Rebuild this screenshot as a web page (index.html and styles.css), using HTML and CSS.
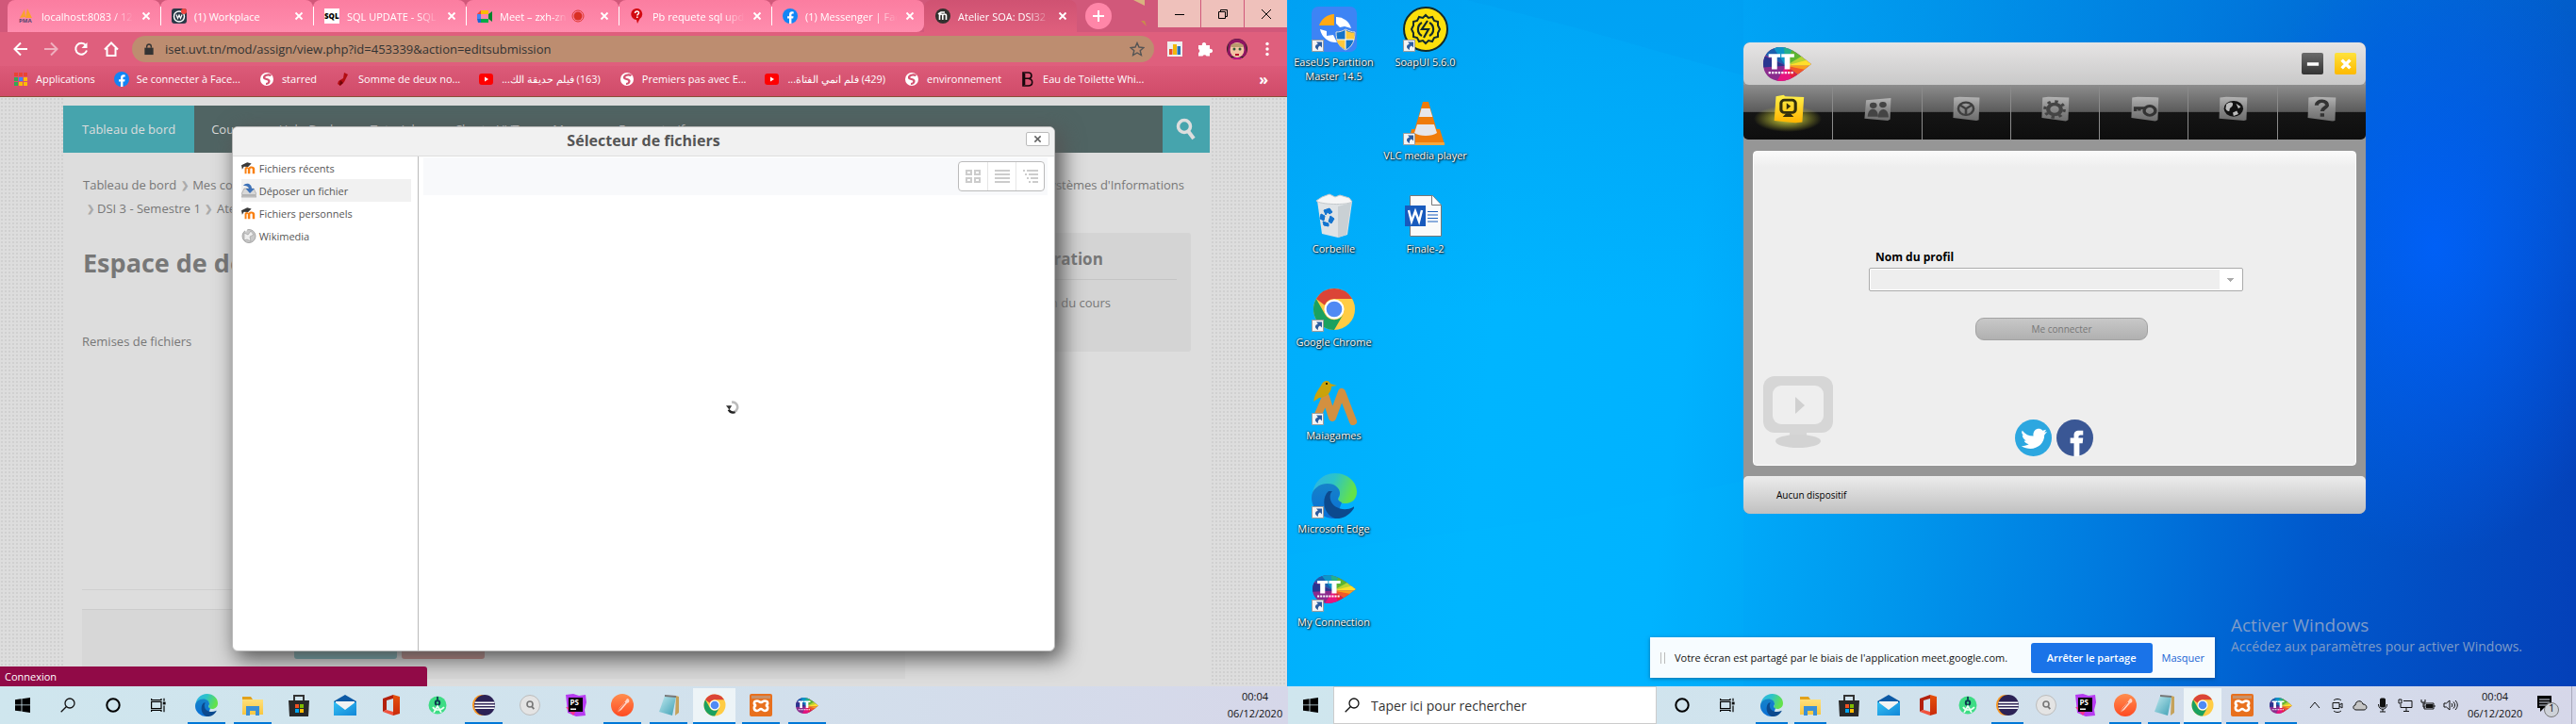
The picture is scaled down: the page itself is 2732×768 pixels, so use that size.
FILE: index.html
```html
<!DOCTYPE html>
<html lang="fr">
<head>
<meta charset="utf-8">
<title>Atelier SOA: DSI32</title>
<link rel="stylesheet" href="styles.css">
</head>
<body>
<svg class="sprite" aria-hidden="true">
  <defs>
    <linearGradient id="g-edge" x1="0" y1="0" x2="1" y2="0.3"><stop offset="0" stop-color="#2fb3e8"/><stop offset=".5" stop-color="#2cc3c9"/><stop offset="1" stop-color="#63e24b"/></linearGradient>
    <linearGradient id="g-edge2" x1="0" y1="0" x2="0" y2="1"><stop offset="0" stop-color="#1683c9"/><stop offset="1" stop-color="#0a6fd6"/></linearGradient>
    <linearGradient id="g-mail" x1="0" y1="0" x2="1" y2="1"><stop offset="0" stop-color="#35c0f3"/><stop offset="1" stop-color="#1187d8"/></linearGradient>
    <linearGradient id="g-post" x1="0" y1="0" x2="0" y2="1"><stop offset="0" stop-color="#ff8e4f"/><stop offset="1" stop-color="#ff4a22"/></linearGradient>
    <linearGradient id="g-office" x1="0" y1="0" x2="0" y2="1"><stop offset="0" stop-color="#e6520c"/><stop offset="1" stop-color="#c92a0b"/></linearGradient>
    <linearGradient id="g-folder" x1="0" y1="0" x2="0" y2="1"><stop offset="0" stop-color="#ffe07a"/><stop offset="1" stop-color="#f8c63f"/></linearGradient>
    <linearGradient id="g-note" x1="0" y1="0" x2="1" y2="1"><stop offset="0" stop-color="#bfe9ef"/><stop offset="1" stop-color="#3e9fb4"/></linearGradient>
    <linearGradient id="g-tile" x1="0" y1="0" x2="0" y2="1"><stop offset="0" stop-color="#b4b4b4"/><stop offset=".45" stop-color="#8c8c8c"/><stop offset="1" stop-color="#6c6c6c"/></linearGradient>
    <linearGradient id="g-gold" x1="0" y1="0" x2="0" y2="1"><stop offset="0" stop-color="#fff04a"/><stop offset="1" stop-color="#ffb400"/></linearGradient>
    <clipPath id="c-tt"><path d="M20 4C9 4 3 13 3 24s6 20 17 20c9 0 20-12 28-20C40 16 29 4 20 4z"/></clipPath>
    <clipPath id="c-face"><circle cx="12" cy="12" r="11"/></clipPath>
  </defs>
  <symbol id="i-win" viewBox="0 0 16 16"><path d="M0 2.200 6.600 1.300v6.200H0zM7.400 1.200 16 0v7.500H7.400zM0 8.300h6.600v6.300L0 13.700zM7.400 8.300H16V16l-8.600-1.200z"/></symbol>
  <symbol id="i-search" viewBox="0 0 16 16"><g fill="none" stroke="#111" stroke-width="1.300"><circle cx="10" cy="6" r="5"/><path d="M6.500 9.500.7 15.300"/></g></symbol>
  <symbol id="i-cortana" viewBox="0 0 16 16"><circle cx="8" cy="8" r="6.700" fill="none" stroke="#000" stroke-width="2"/></symbol>
  <symbol id="i-task" viewBox="0 0 16 16"><g fill="none" stroke="#000" stroke-width="1.200"><path d="M.6 4.500h10.400v7H.6zM.6 1v1.700h10.400V1M.6 15v-1.600h10.400V15M14 .8v3M14 8.500v6.700"/></g><path d="M12.800 4.600h2.800v2.800h-2.800z"/></symbol>
  <symbol id="i-edge" viewBox="0 0 48 48"><path d="M1 24C1 10 12 0 25 0c13 0 23 9 23 20 0 7-5 12-12 12-5 0-8-2-8-4 0-1 2-3 2-6 0-5-5-9-12-9C9 13 3 18 1 24z" fill="url(#g-edge)"/><path d="M0 26c0-9 8-15 17-15 8 0 13 5 13 10 0 3-2 5-2 6 0 1 1 3 4 4l-6 16c-1 1-2 1-2 1C11 48 0 38 0 26z" fill="url(#g-edge2)"/><path d="M18 19c-8 7-6 25 7 29 8 1 16-4 20-11 0-1 0-2-1-1-9 5-22 1-24-8-1-4 0-7 2-9z" fill="#0c4a8e"/></symbol>
  <symbol id="i-folder" viewBox="0 0 24 24"><path d="M1 3h9l2 3h10v16H1z" fill="#e2a21b"/><path d="M1 6h22v16H1z" fill="url(#g-folder)"/><path d="M5 13h14v10h-4v-5H9v5H5z" fill="#3a8fd6"/></symbol>
  <symbol id="i-store" viewBox="0 0 24 24"><path d="M7 7V2h10v5" fill="none" stroke="#333" stroke-width="2"/><path d="M1 7h22l-1 17H2z" fill="#292929"/><path d="M8 11h4v4H8z" fill="#f25022"/><path d="M13 11h4v4h-4z" fill="#7fba00"/><path d="M8 16h4v4H8z" fill="#00a4ef"/><path d="M13 16h4v4h-4z" fill="#ffb900"/></symbol>
  <symbol id="i-mail" viewBox="0 0 24 24"><path d="M0 8 12 1l12 7v3H0z" fill="#0c59a4"/><path d="M2 8h20v9H2z" fill="#f3f3f3"/><path d="M0 8l12 9 12-9v15H0z" fill="url(#g-mail)"/></symbol>
  <symbol id="i-office" viewBox="0 0 24 24"><path d="M14 1 3 5v14l4-2V7l7-2z" fill="#b3200c"/><path d="M14 1l7 2v18l-7 2z" fill="url(#g-office)"/><path d="M3 19l4-2 7 2v4z" fill="#f0523d"/></symbol>
  <symbol id="i-android" viewBox="0 0 24 24"><circle cx="12" cy="12" r="9.500" fill="#3ddc84"/><circle cx="12" cy="9.500" r="3.200" fill="#0b3b4f"/><circle cx="12" cy="9.500" r="1.200" fill="#3ddc84"/><path d="M11 3h2v4h-2z" fill="#174b58"/><path d="M8 20l4-7 4 7M7 14c2 4 9 4 12 0" fill="none" stroke="#e8fff2" stroke-width="1.700"/></symbol>
  <symbol id="i-eclipse" viewBox="0 0 24 24"><ellipse cx="10" cy="12" rx="10" ry="11" fill="#f7941e"/><circle cx="13" cy="12" r="11" fill="#2c2255"/><path d="M2.500 8.500h21v1.600h-21zM2.300 11.500h21.500v1.600H2.300zM2.500 14.500h21v1.600h-21z" fill="#fff"/></symbol>
  <symbol id="i-find" viewBox="0 0 24 24"><circle cx="12" cy="12" r="10.500" fill="#e4e4e4" stroke="#bcbcbc"/><circle cx="12" cy="11" r="3" fill="none" stroke="#777" stroke-width="1.600"/><path d="M13.800 13.200l2.500 3" stroke="#777" stroke-width="1.800"/></symbol>
  <symbol id="i-ps" viewBox="0 0 24 24"><path d="M1 1l8-1 6 2 7-1 1 8-2 8 1 6-10 1-9-4L2 10z" fill="#b63bf0"/><path d="M1 14l8 9 5-8z" fill="#ff318c"/><path d="M4 4h15v15H4z"/><text x="5.500" y="12" font-size="8" font-weight="700" fill="#fff">PS</text><path d="M6 15.500h6V17H6z" fill="#fff"/></symbol>
  <symbol id="i-postman" viewBox="0 0 24 24"><circle cx="12" cy="12" r="12" fill="url(#g-post)"/><path d="M17 5c2 0 3 2 2 4l-2 1-6 7-5 3 3-5 6-7z" fill="#ffd3c4"/><path d="M6 20l9-11" stroke="#f25b2e"/></symbol>
  <symbol id="i-notepad" viewBox="0 0 24 24"><path d="M20 2l3 1v17l-4 3z" fill="#c5a25b"/><path d="M8 2l12 1-4 20-14-4z" fill="url(#g-note)"/><path d="M8 1l12 1v2L8 3z" fill="#777"/></symbol>
  <symbol id="i-chrome" viewBox="0 0 48 48"><circle cx="24" cy="24" r="23" fill="#fc4"/><path d="M4.100 12.500A23 23 0 0 1 44 12.500H24a11.500 11.500 0 0 0-10.500 7z" fill="#db4437"/><path d="M4.100 12.500A23 23 0 0 0 24 47l10-17.300A11.500 11.500 0 0 1 14 30z" fill="#1ba15f"/><circle cx="24" cy="24" r="11" fill="#fff"/><circle cx="24" cy="24" r="8.700" fill="#4f8af4"/></symbol>
  <symbol id="i-xampp" viewBox="0 0 24 24"><rect width="24" height="24" rx="2" fill="#e8701e"/><path d="M2 2h20v3H2z" fill="#c9916a"/><path d="M8 7.500c-4 0-4 4-1 4.500-3 1-3 6 1 6 2 0 2.500-2 4-2s2 2 4 2c4 0 4-5 1-6 3-.5 3-4.500-1-4.500-2 0-2.500 1.500-4 1.500S10 7.500 8 7.500z" fill="none" stroke="#fff" stroke-width="2.600"/></symbol>
  <symbol id="i-tt" viewBox="3 4 45 40" preserveAspectRatio="none"><g clip-path="url(#c-tt)"><path d="M0 0h48v48H0z" fill="#8a2c8d"/><path d="M24 26 0 10V0h16z" fill="#1b5fae"/><path d="M24 26 10 0h14z" fill="#0e96c8"/><path d="M24 26 22 0h12z" fill="#23b08d"/><path d="M24 26 32 0h16v10z" fill="#5cb531"/><path d="M24 26 48 8v12z" fill="#b7d433"/><path d="M24 26 48 18v8z" fill="#ffdf2b"/><path d="M24 26h24v8z" fill="#f9a11b"/><path d="M24 26 48 32v16z" fill="#f0592a"/><path d="M24 26 46 48H28z" fill="#e4203a"/><path d="M24 26 32 48H14z" fill="#e6157f"/><path d="M24 26 0 12v16z" fill="#28358f"/></g><path d="M8 12h11v4h-3v14h-5V16H8zM20 12h12v4h-4v14h-5V16h-3z" fill="#fff"/><path d="M8 34h24" stroke="#fff" stroke-width="2.500" stroke-dasharray="2 1"/></symbol>
  <symbol id="i-short" viewBox="0 0 13 13"><path d="M.5.5h12v12H.5z" fill="#f4f4f4" stroke="#9c9c9c"/><path d="M5 2.500h6v6L9 6.500c-2 1-2.500 2.500-2 4.500C3 9 3 6 6.800 4.500z" fill="#2d5c9f"/></symbol>
  <symbol id="i-fb" viewBox="0 0 16 16"><circle cx="8" cy="8" r="8" fill="#1285f5"/><path d="M7 16v-5.500H5V8.200h2V6.400c0-2 1.200-3.100 3-3.100l1.700.1v2h-1C9.700 5.400 9.400 6 9.400 6.700v1.500h2.200l-.4 2.300H9.400V16z" fill="#fff"/></symbol>
  <symbol id="i-s" viewBox="0 0 16 16"><circle cx="8" cy="8" r="7" fill="#fff"/><path d="M12.500 4C9 2.500 5 4 5 6.200s5.500 1.500 5.500 3.800S8 13 7 13" fill="none" stroke="#d4506f" stroke-width="2.200"/></symbol>
  <symbol id="i-yt" viewBox="0 0 16 16"><rect y="2" width="15" height="12" rx="3" fill="#f00"/><path d="M6 5.500v5l4-2.500z" fill="#fff"/></symbol>
  <symbol id="i-moodle" viewBox="0 0 18 16"><path d="M4 15V9.500C4 7 7 6 8.500 8 10.500 5.500 16 6 16 9.500V15h-2.800v-5c0-2-2.700-2-2.700 0v5H7.700v-5c0-1.500-1.300-1.500-1.500 0v5z" fill="#f98012"/><path d="M0 5l7-3.500L12 3 8 7 3 6.500 1 10z" fill="#3a3a3a"/></symbol>
  <symbol id="i-x" viewBox="0 0 10 10"><path d="M1.500 1.500l7 7M8.500 1.500l-7 7" fill="none" stroke="currentColor" stroke-width="1.800"/></symbol>
</svg>

<main class="screens">
<section class="screen">
  <div class="browser">
    <div class="tabstrip">
      <div class="tabs">
        <div class="tab"><svg class="fav" viewBox="0 0 16 16"><path d="M1 10 6 1l1 8zM7 10 9 0l5 10z" fill="#f9a22b"/><text x="0" y="15" font-size="6" font-weight="700" fill="#53436f">PMA</text></svg><a href="#" class="tab-name">localhost:8083 / 127.0.0.1</a><button class="tab-x" aria-label="Fermer"><svg><use href="#i-x"/></svg></button></div>
        <div class="tab"><svg class="fav" viewBox="0 0 16 16"><rect width="16" height="16" rx="3" fill="#2b3948"/><circle cx="8" cy="8.500" r="5.500" fill="none" stroke="#fff" stroke-width="1.400"/><path d="M5 6.500l1.500 4L8 7l1.500 3.500 1.500-4" fill="none" stroke="#fff" stroke-width="1.200"/><circle cx="13" cy="3" r="3" fill="#f2463f"/></svg><a href="#" class="tab-name">(1) Workplace</a><button class="tab-x" aria-label="Fermer"><svg><use href="#i-x"/></svg></button></div>
        <div class="tab"><svg class="fav" viewBox="0 0 16 16"><path d="M0 0h16v16H0z" fill="#fff"/><text x="0" y="11" font-size="8" font-weight="800">SQL</text></svg><a href="#" class="tab-name">SQL UPDATE - SQL tutoriel</a><button class="tab-x" aria-label="Fermer"><svg><use href="#i-x"/></svg></button></div>
        <div class="tab"><svg class="fav" viewBox="0 0 16 16"><path d="M0 6l4-4v4z" fill="#ea4335"/><path d="M4 2h8v4H4z" fill="#fbbc04"/><path d="M0 6h4v5H0z" fill="#4285f4"/><path d="M0 11h4v4H1z" fill="#1967d2"/><path d="M4 11h8v4H4z" fill="#00ac47"/><path d="M12 6l4-3v11l-4-3z" fill="#00832d"/></svg><a href="#" class="tab-name">Meet – zxh-znbk-qrt</a><svg class="rec" viewBox="0 0 14 14"><circle cx="7" cy="7" r="6" fill="none" stroke="#e0382f"/><circle cx="7" cy="7" r="4.500" fill="#d93025"/></svg><button class="tab-x" aria-label="Fermer"><svg><use href="#i-x"/></svg></button></div>
        <div class="tab"><svg class="fav" viewBox="0 0 16 16"><path d="M7.500 0a6 6 0 0 1 3 11l-2.500 5-1-4A6 6 0 0 1 7.500 0z" fill="#d20a11"/><path d="M5.500 5c0-3 4.500-2.500 4 0-.2 1.200-1.700 1.200-1.700 2.500M7.800 8.600v1.500" fill="none" stroke="#fff" stroke-width="1.500"/></svg><a href="#" class="tab-name">Pb requete sql update par</a><button class="tab-x" aria-label="Fermer"><svg><use href="#i-x"/></svg></button></div>
        <div class="tab"><svg class="fav"><use href="#i-fb"/></svg><a href="#" class="tab-name">(1) Messenger | Facebook</a><button class="tab-x" aria-label="Fermer"><svg><use href="#i-x"/></svg></button></div>
        <div class="tab tab-on"><svg class="fav" viewBox="0 0 16 16"><circle cx="8" cy="8" r="8" fill="#33302e"/><path d="M4.500 12V7.500c0-2 3.300-2 3.300 0V12 7.500c0-2 3.700-2 3.700 0V12M3 6l3-2h4" fill="none" stroke="#fff" stroke-width="1.600"/></svg><a href="#" class="tab-name">Atelier SOA: DSI32 - Remise</a><button class="tab-x" aria-label="Fermer"><svg><use href="#i-x"/></svg></button></div>
      </div>
      <button class="newtab" aria-label="Nouvel onglet"><svg viewBox="0 0 12 12"><path d="M6 0v12M0 6h12" stroke="#fff" stroke-width="2"/></svg></button>
      <svg class="deco" viewBox="0 0 40 30"><path d="M14 0h12v6l-6-3z" fill="#d9b27f"/><path d="M22 22l6 6-2-6z" fill="#c98a4c"/></svg>
      <div class="winbtns">
        <button aria-label="Réduire"><svg viewBox="0 0 12 12"><path d="M1 6.500h10" stroke="#000"/></svg></button>
        <button aria-label="Restaurer"><svg viewBox="0 0 12 12"><path d="M1.500 3.500h7v7h-7zM3.500 3.500v-2h7v7h-2" fill="none" stroke="#000"/></svg></button>
        <button aria-label="Fermer"><svg viewBox="0 0 12 12"><path d="M1 1l10 10M11 1 1 11" stroke="#000"/></svg></button>
      </div>
    </div>
    <div class="toolbar">
      <button class="tool" aria-label="Retour"><svg viewBox="0 0 16 16"><path d="M8 1.500 1.500 8 8 14.500M2 8h13" fill="none" stroke="#fff" stroke-width="2"/></svg></button>
      <button class="tool dim" aria-label="Avancer"><svg viewBox="0 0 16 16"><path d="M8 1.500 14.500 8 8 14.500M14 8H1" fill="none" stroke="#fff" stroke-width="2"/></svg></button>
      <button class="tool" aria-label="Actualiser"><svg viewBox="0 0 16 16"><path d="M13 4A6 6 0 1 0 14 9.500" fill="none" stroke="#fff" stroke-width="2"/><path d="M14.500 1v6h-6z" fill="#fff"/></svg></button>
      <button class="tool" aria-label="Accueil"><svg viewBox="0 0 16 16"><path d="M1 8.500 8 1.500l7 7M3.500 7v8h9V7" fill="none" stroke="#fff" stroke-width="2"/></svg></button>
      <div class="omnibox">
        <svg class="lock" viewBox="0 0 12 14"><path d="M1 5h10v8H1z" fill="#333"/><path d="M3.500 5V3.500a2.500 2.500 0 0 1 5 0V5" fill="none" stroke="#333" stroke-width="1.500"/></svg>
        <input type="text" aria-label="Adresse" value="iset.uvt.tn/mod/assign/view.php?id=453339&amp;action=editsubmission">
        <svg class="star" viewBox="0 0 16 16"><path d="M8 1.500l2 4.500 5 .5-3.800 3.200 1.200 4.800L8 12l-4.400 2.500 1.200-4.800L1 6.500 6 6z" fill="none" stroke="#555" stroke-width="1.400"/></svg>
      </div>
      <svg class="ext" viewBox="0 0 16 16"><path d="M0 0h16v16H0z" fill="#eee"/><path d="M2 8h3.500v6H2z" fill="#e8502b"/><path d="M6 3h4v11H6z" fill="#f2b80a"/><path d="M10.500 5H14v9h-3.500z" fill="#2372ba"/></svg>
      <svg class="ext" viewBox="0 0 16 16"><path d="M1 4h4a2.200 2.200 0 1 1 4 0h4v4a2.200 2.200 0 1 1 0 4v3.500H9.500a2.200 2.200 0 0 0-4 0H1V12a2.200 2.200 0 0 0 0-4z" fill="#fff"/></svg>
      <svg class="face" viewBox="0 0 24 24"><g clip-path="url(#c-face)"><path d="M0 0h24v24H0z" fill="#2d2622"/><path d="M3 5c4-5 14-5 18 0l2 15H1z" fill="#8f1562"/><ellipse cx="12" cy="13" rx="7.500" ry="8" fill="#f3c3a2"/><path d="M5 8c3-3 11-3 14 0l-1 2H6z" fill="#b99a6d"/><circle cx="9" cy="12" r="1.500" fill="#2f5b3a"/><circle cx="15" cy="12" r="1.500" fill="#2f5b3a"/><path d="M10 17h4v2h-4z" fill="#b6152a"/><path d="M7 21h10v3H7z" fill="#c3118d"/></g></svg>
      <svg class="dots" viewBox="0 0 4 16"><circle cx="2" cy="2.500" r="1.700"/><circle cx="2" cy="8" r="1.700"/><circle cx="2" cy="13.500" r="1.700"/></svg>
    </div>
    <nav class="bookmarks">
      <a href="#"><svg viewBox="0 0 16 16"><path d="M1 1h4v4H1zM6 1h4v4H6zM11 1h4v4h-4z" fill="#ea4335"/><path d="M1 6h4v4H1z" fill="#34a853"/><path d="M6 6h4v4H6z" fill="#4285f4"/><path d="M11 6h4v4h-4z" fill="#fbbc05"/><path d="M1 11h4v4H1z" fill="#34a853"/><path d="M6 11h4v4H6zM11 11h4v4h-4z" fill="#fbbc05"/></svg>Applications</a>
      <a href="#"><svg><use href="#i-fb"/></svg>Se connecter à Face...</a>
      <a href="#"><svg><use href="#i-s"/></svg>starred</a>
      <a href="#"><svg viewBox="0 0 16 16"><path d="M9 1l4 2-4 8-4 4-3-2 1-3 5-3z" fill="#b30d12"/><path d="M5 9l3 3-4 3z" fill="#6d0508"/></svg>Somme de deux no...</a>
      <a href="#"><svg><use href="#i-yt"/></svg><span dir="rtl">(163) فيلم حديقة الك...</span></a>
      <a href="#"><svg><use href="#i-s"/></svg>Premiers pas avec E...</a>
      <a href="#"><svg><use href="#i-yt"/></svg><span dir="rtl">(429) فلم انمي الفتاة...</span></a>
      <a href="#"><svg><use href="#i-s"/></svg>environnement</a>
      <a href="#"><svg viewBox="0 0 16 16"><path d="M3 1h5.500c4.500 0 4.500 6 .5 6.500 5 .5 5 7.500-.5 7.500H3zM4.500 7.300h5M4.500 2v12" fill="none" stroke="#16060b" stroke-width="1.600"/></svg>Eau de Toilette Whi...</a>
      <button class="more" aria-label="Autres favoris">»</button>
    </nav>
    <div class="viewport">
      <div class="site">
        <nav class="sitenav">
          <a href="#" class="on">Tableau de bord</a><a href="#">Cours</a><a href="#">Help Desk</a><a href="#">Tutoriels</a><a href="#">Charte UVT</a><a href="#">Mooc</a><a href="#">Espace tarifs</a>
          <button class="sitesearch" aria-label="Rechercher"><svg viewBox="0 0 24 24"><circle cx="10" cy="9" r="6.500" fill="none" stroke="#ddd" stroke-width="3.500"/><path d="M14 14l6 8" stroke="#ddd" stroke-width="4"/></svg></button>
        </nav>
        <div class="crumbs"><a href="#">Tableau de bord</a><b>❯</b><a href="#">Mes cours</a><span class="crumb-end">Département Systèmes d'Informations</span></div>
        <div class="crumbs"><b class="first">❯</b><a href="#">DSI 3 - Semestre 1</a><b>❯</b><a href="#">Atelier SOA</a></div>
        <div class="cols">
          <div class="maincol">
            <h1>Espace de dépôt</h1>
            <p>Remises de fichiers</p>
            <div class="formrow"></div>
            <div class="actions"><button>Enregistrer</button><button class="cancel">Annuler</button></div>
          </div>
          <aside class="block"><h2>Administration</h2><a href="#">Administration du cours</a></aside>
        </div>
      </div>
      <div class="modal" role="dialog" aria-label="Sélecteur de fichiers">
        <header><h3>Sélecteur de fichiers</h3><button class="modal-x" aria-label="Fermer la fenêtre"><svg><use href="#i-x"/></svg></button></header>
        <div class="modal-body">
          <ul class="repos">
            <li><a href="#"><svg viewBox="0 0 18 16"><use href="#i-moodle"/></svg>Fichiers récents</a></li>
            <li class="sel"><a href="#"><svg viewBox="0 0 16 16"><path d="M3 6h10l3 6v3H0v-3z" fill="#d8d8d8" stroke="#9d9d9d" stroke-width=".7"/><path d="M1 12h14v2.500H1z" fill="#b5b5b5"/><path d="M2 3c3-4 9-2 9 3h3L9 11 4.500 6H8c0-2-3-3.500-6-3z" fill="#3e72b8"/></svg>Déposer un fichier</a></li>
            <li><a href="#"><svg viewBox="0 0 18 16"><use href="#i-moodle"/></svg>Fichiers personnels</a></li>
            <li><a href="#"><svg viewBox="0 0 16 16"><circle cx="8" cy="8.500" r="7" fill="#c9c9c9" stroke="#a5a5a5"/><path d="M3 5l4 2 3-4 3 4-4 2 1 5-4-2-3 1z" fill="#eee" stroke="#999" stroke-width=".6"/><path d="M2 0h5L5 4z" fill="#fff"/></svg>Wikimedia</a></li>
          </ul>
          <div class="files">
            <div class="filebar"><div class="views">
              <button aria-label="Icônes"><svg viewBox="0 0 16 16"><path d="M1 2h5v4H1zM10 2h5v4h-5zM1 10h5v4H1zM10 10h5v4h-5z" fill="none" stroke="#ccc" stroke-width="2"/></svg></button>
              <button aria-label="Liste"><svg viewBox="0 0 16 16"><path d="M0 2h16M0 6h16M0 10h16M0 14h16" stroke="#ccc" stroke-width="2"/></svg></button>
              <button aria-label="Arborescence"><svg viewBox="0 0 16 16"><path d="M0 2h2M4 2h12M2 6h2M6 6h10M4 10h2M8 10h8M6 14h2M10 14h6" stroke="#ccc" stroke-width="2"/></svg></button>
            </div></div>
            <div class="loading"><svg viewBox="0 0 16 16"><path d="M7 2A6 6 0 1 1 4 12.500" fill="none" stroke="#bbb" stroke-width="3"/><path d="M3 11c2 3 5 4 8 3" fill="none" stroke="#222" stroke-width="2.600"/><path d="M0 6h7L4 11z" fill="#333"/></svg></div>
          </div>
        </div>
      </div>
      <div class="status">Connexion</div>
    </div>
  </div>
  <footer class="taskbar">
    <button aria-label="Démarrer"><svg class="small"><use href="#i-win"/></svg></button>
    <button aria-label="Rechercher"><svg class="small"><use href="#i-search"/></svg></button>
    <button aria-label="Cortana"><svg class="small"><use href="#i-cortana"/></svg></button>
    <button aria-label="Vue des tâches"><svg class="small"><use href="#i-task"/></svg></button>
    <button class="app run" aria-label="Edge"><svg><use href="#i-edge"/></svg></button>
    <button class="app run" aria-label="Explorateur"><svg><use href="#i-folder"/></svg></button>
    <button class="app" aria-label="Store"><svg><use href="#i-store"/></svg></button>
    <button class="app" aria-label="Courrier"><svg><use href="#i-mail"/></svg></button>
    <button class="app" aria-label="Office"><svg><use href="#i-office"/></svg></button>
    <button class="app" aria-label="Android Studio"><svg><use href="#i-android"/></svg></button>
    <button class="app run" aria-label="Eclipse"><svg><use href="#i-eclipse"/></svg></button>
    <button class="app" aria-label="Recherche"><svg><use href="#i-find"/></svg></button>
    <button class="app" aria-label="PhpStorm"><svg><use href="#i-ps"/></svg></button>
    <button class="app run" aria-label="Postman"><svg><use href="#i-postman"/></svg></button>
    <button class="app run" aria-label="Bloc-notes"><svg><use href="#i-notepad"/></svg></button>
    <button class="app run active" aria-label="Chrome"><svg><use href="#i-chrome"/></svg></button>
    <button class="app run" aria-label="XAMPP"><svg><use href="#i-xampp"/></svg></button>
    <button class="app run tt" aria-label="My Connection"><svg><use href="#i-tt"/></svg></button>
    <time class="clock push">00:04<br>06/12/2020</time>
  </footer>
</section>

<section class="screen">
  <div class="desktop">
    <svg class="rays" viewBox="0 0 1366 728" preserveAspectRatio="none" aria-hidden="true"><path d="M0 588 300 548 483 510 V728H0z" fill="#00c0ff" fill-opacity=".12"/><path d="M190 0 300 28 483 80V0z" fill="#0088e8" fill-opacity=".12"/></svg>
    <div class="icons">
      <a href="#" class="c1 r1"><svg viewBox="0 0 48 48"><rect width="48" height="48" rx="7" fill="#3d84f5"/><path d="M24 8v12H8A17 17 0 0 1 24 8z" fill="#ffa914"/><path d="M26 11a16 16 0 0 1 16 12l-7-2-5 1-4-4zM9 24l7 2 0 5 7-1 4 8A17 17 0 0 1 9 24z" fill="#fff"/><path d="M36 24c4 2 7 3 10 3 0 9-3 16-10 19-7-3-10-10-10-19 4 0 7-1 10-3z" fill="#1372c8" stroke="#ddd"/><path d="M36 25c3 2 6 2.500 9.500 2.500V35H36zM26.500 35H36v10.500c-6-3-9-7-9.500-10.500z" fill="#ffc83b"/><path d="M36 25v20M27 35h18" stroke="#fff"/><use href="#i-short" x="0" y="35" width="13" height="13"/></svg>EaseUS Partition Master 14.5</a>
      <a href="#" class="c2 r1"><svg viewBox="0 0 48 48"><circle cx="24" cy="24" r="23" fill="#fde00b" stroke="#142b2b" stroke-width="2"/><path d="M24 9l3 3 4-1 2 4 4 1v4l2 4-2 4v4l-4 1-2 4-4-1-3 3-3-3-4 1-2-4-4-1v-4l-2-4 2-4v-4l4-1 2-4 4 1z" fill="none" stroke="#142b2b" stroke-width="2"/><path d="M20 17a8 8 0 0 0 0 14M28 17a8 8 0 0 1 0 14M26 15l-6 9h7l-5 9" fill="none" stroke="#142b2b" stroke-width="2.200"/><use href="#i-short" x="0" y="35" width="13" height="13"/></svg>SoapUI 5.6.0</a>
      <a href="#" class="c2 r2"><svg viewBox="0 0 48 48"><path d="M9 31h30l5 16H5z" fill="#f07c0a"/><path d="M5 45h39v3H5z" fill="#f9a63a"/><path d="M21 2h6l10 34c-3 6-23 6-26 0z" fill="#ef7b0a"/><path d="M19.500 9h9l2.800 9H17zM15 26h18l3 9c-5 4-19 4-24 0z" fill="#e6e6ea"/><use href="#i-short" x="0" y="35" width="13" height="13"/></svg>VLC media player</a>
      <a href="#" class="c1 r3"><svg viewBox="0 0 48 48"><path d="M6 8l37 1-5 35-10 3-17-4z" fill="#dfe3e6"/><path d="M5 8c4 4 32 5 38 1L40 5 30 2l-5 2-6-3-8 3z" fill="#f6f6f6" stroke="#c4c9cc"/><path d="M28 14l14-4-5 34-9 3z" fill="#c9d0d4"/><path d="M13 18l6-2 3 4-3 2-2-2-2 3zM10 22l4 2-1 5-4-2zM12 30l6 2v3l-5-1zM20 24l4 3-3 5-3-2z" fill="#1374cf" stroke="#1374cf"/></svg>Corbeille</a>
      <a href="#" class="c2 r3"><svg viewBox="0 0 48 48"><path d="M7.500 2.500h24l9 10v33h-33z" fill="#fafafa" stroke="#777"/><path d="M30.500 2.500v10h10" fill="#fff" stroke="#777"/><path d="M26 19.500h11M26 23h11M26 26.500h11M26 30h11" stroke="#1c5fbe"/><path d="M2 13h22v22H2z" fill="#185abd"/><path d="M6 18l3 12 4-11 4 11 3-12" fill="none" stroke="#fff" stroke-width="2.400"/></svg>Finale-2</a>
      <a href="#" class="c1 r4"><svg viewBox="0 0 48 48"><use href="#i-chrome" x="1" y="1" width="46" height="46"/><use href="#i-short" x="0" y="35" width="13" height="13"/></svg>Google Chrome</a>
      <a href="#" class="c1 r5"><svg viewBox="0 0 48 48"><path d="M6 39 15 18 22 40 32 13 44 44" fill="none" stroke="#d39040" stroke-width="8" stroke-linejoin="round" stroke-linecap="round"/><path d="M2 23C4 12 9 9 11 4c2-4 8-4 9 0l7 2-6 1c0 7-6 12-13 12z" fill="#c9a30a"/><circle cx="16" cy="4" r="1"/><use href="#i-short" x="0" y="35" width="13" height="13"/></svg>Maiagames</a>
      <a href="#" class="c1 r6"><svg viewBox="0 0 48 48"><use href="#i-edge" width="48" height="48"/><use href="#i-short" x="0" y="35" width="13" height="13"/></svg>Microsoft Edge</a>
      <a href="#" class="c1 r7"><svg viewBox="0 0 48 48"><use href="#i-tt" x="1" y="9" width="46" height="30"/><use href="#i-short" x="0" y="35" width="13" height="13"/></svg>My Connection</a>
    </div>

    <div class="mcwin">
      <header class="mc-title"><svg class="mc-logo"><use href="#i-tt"/></svg>
        <button class="mc-min" aria-label="Réduire"><svg viewBox="0 0 16 16"><path d="M1 6h14v4H1z" fill="#fff"/></svg></button>
        <button class="mc-close" aria-label="Fermer"><svg viewBox="0 0 16 16"><path d="M3 3l10 10M13 3 3 13" stroke="#fff" stroke-width="4"/></svg></button></header>
      <nav class="mc-tabs">
        <button class="on" aria-label="Connexion"><svg viewBox="0 0 40 40" preserveAspectRatio="none"><path d="M5 3l9-2 2 2 22 1-2 34-8 1L3 36z" fill="url(#g-gold)"/><rect x="11" y="8" width="17" height="17" rx="4" fill="none" stroke="#33300c" stroke-width="3.500"/><path d="M17.500 12v9l5-4.500zM13 31l4-5h5l4 5z" fill="#33300c"/></svg></button>
        <button aria-label="Contacts"><svg viewBox="0 0 40 40" preserveAspectRatio="none"><path d="M6 6l31-3-1 32-3 2-29-3z" fill="url(#g-tile)"/><g fill="#444"><circle cx="15" cy="14" r="4.500"/><path d="M8 31c0-15 13-15 13 0z"/><circle cx="27" cy="13" r="4.500"/><path d="M21 32c0-16 13-16 13 0z"/></g></svg></button>
        <button aria-label="Statistiques"><svg viewBox="0 0 40 40" preserveAspectRatio="none"><path d="M5 2l7-1 25 1-1 34-3 1-29-4z" fill="url(#g-tile)"/><circle cx="20" cy="19" r="9.500" fill="none" stroke="#3f3f3f" stroke-width="3"/><path d="M20 19V30M20 19l-8-6M20 19l8-6" stroke="#3f3f3f" stroke-width="3"/></svg></button>
        <button aria-label="Réglages"><svg viewBox="0 0 40 40" preserveAspectRatio="none"><path d="M5 2l7-1 26 1-1 34-3 2-30-5z" fill="url(#g-tile)"/><circle cx="20" cy="20" r="8" fill="none" stroke="#444" stroke-width="5"/><circle cx="20" cy="20" r="12" fill="none" stroke="#444" stroke-width="4" stroke-dasharray="4 5.420"/></svg></button>
        <button aria-label="Clé"><svg viewBox="0 0 40 40" preserveAspectRatio="none"><path d="M5 2l7-1 26 1-1 34-3 2-30-5z" fill="url(#g-tile)"/><circle cx="27" cy="22" r="7" fill="none" stroke="#333" stroke-width="4"/><path d="M21 18H9v5M14 18v4" fill="none" stroke="#333" stroke-width="4"/></svg></button>
        <button aria-label="Internet"><svg viewBox="0 0 40 40" preserveAspectRatio="none"><path d="M4 2l8-1 26 1-1 34-3 1-31-3z" fill="url(#g-tile)"/><circle cx="21" cy="19" r="12" fill="#111"/><path d="M12 12c4-4 9-4 8 1s-4 4-4 8-4 1-5-2zM24 11l6 5-3 3zM20 25l5-3 2 5-6 3z" fill="#bbb"/></svg></button>
        <button aria-label="Aide"><svg viewBox="0 0 40 40" preserveAspectRatio="none"><path d="M4 2l8-1 26 1-1 35-3 1-31-5z" fill="url(#g-tile)"/><path d="M14 14c0-9 14-8 13 0-1 4-6 4-6 9M21 26v5" fill="none" stroke="#333" stroke-width="5"/></svg></button>
      </nav>
      <div class="mc-main">
        <div class="mc-form">
          <label for="profil">Nom du profil</label>
          <select id="profil" disabled><option></option></select>
          <button class="mc-go" disabled>Me connecter</button>
        </div>
        <div class="mc-foot">
          <svg class="mc-mon" viewBox="0 0 74 76"><rect width="74" height="60" rx="12" fill="#d6d6d6"/><rect x="10" y="10" width="54" height="41" rx="9" fill="#eee"/><path d="M34 22v18l10-9z" fill="#d0d0d0"/><path d="M28 58h18v6H28z" fill="#d6d6d6"/><ellipse cx="37" cy="69" rx="24" ry="7" fill="#d3d3d3"/></svg>
          <div class="mc-social">
            <a href="#" aria-label="Twitter"><svg viewBox="0 0 40 40"><circle cx="20" cy="20" r="20" fill="#2ca7e0"/><path d="M8 12c3 4 7 6 12 6-1-8 7-10 10-6l4-1-2 3 3-1-3 4c0 12-13 19-25 12 4 0 6-1 8-2-3-1-5-3-5-4h2c-3-2-4-4-4-6l2 .5c-3-2-3-4-2-5.500z" fill="#fff"/></svg></a>
            <a href="#" aria-label="Facebook"><svg viewBox="0 0 40 40"><circle cx="20" cy="20" r="20" fill="#3a5795"/><path d="M19 40V26h-4v-6h4v-3c0-4 3-5 5-5h5v5h-2c-2 0-3 .5-3 2v1h5l-.6 6H25v14z" fill="#fff"/></svg></a>
          </div>
        </div>
      </div>
      <footer class="mc-status">Aucun dispositif</footer>
    </div>

    <div class="watermark"><p class="w1">Activer Windows</p><p>Accédez aux paramètres pour activer Windows.</p></div>
    <div class="share"><i class="grip"></i><span>Votre écran est partagé par le biais de l'application meet.google.com.</span><button class="stop">Arrêter le partage</button><button class="hide">Masquer</button></div>
  </div>
  <footer class="taskbar second">
    <button aria-label="Démarrer"><svg class="small"><use href="#i-win"/></svg></button>
    <div class="winsearch"><svg class="small"><use href="#i-search"/></svg><input type="text" aria-label="Rechercher" placeholder="Taper ici pour rechercher"></div>
    <button aria-label="Cortana"><svg class="small"><use href="#i-cortana"/></svg></button>
    <button aria-label="Vue des tâches"><svg class="small"><use href="#i-task"/></svg></button>
    <button class="app run" aria-label="Edge"><svg><use href="#i-edge"/></svg></button>
    <button class="app run" aria-label="Explorateur"><svg><use href="#i-folder"/></svg></button>
    <button class="app" aria-label="Store"><svg><use href="#i-store"/></svg></button>
    <button class="app" aria-label="Courrier"><svg><use href="#i-mail"/></svg></button>
    <button class="app" aria-label="Office"><svg><use href="#i-office"/></svg></button>
    <button class="app" aria-label="Android Studio"><svg><use href="#i-android"/></svg></button>
    <button class="app run" aria-label="Eclipse"><svg><use href="#i-eclipse"/></svg></button>
    <button class="app" aria-label="Recherche"><svg><use href="#i-find"/></svg></button>
    <button class="app" aria-label="PhpStorm"><svg><use href="#i-ps"/></svg></button>
    <button class="app run" aria-label="Postman"><svg><use href="#i-postman"/></svg></button>
    <button class="app run" aria-label="Bloc-notes"><svg><use href="#i-notepad"/></svg></button>
    <button class="app run active" aria-label="Chrome"><svg><use href="#i-chrome"/></svg></button>
    <button class="app run" aria-label="XAMPP"><svg><use href="#i-xampp"/></svg></button>
    <button class="app run tt" aria-label="My Connection"><svg><use href="#i-tt"/></svg></button>
    <div class="tray">
      <svg viewBox="0 0 16 16"><path d="M3 11l5-6 5 6" /></svg>
      <svg viewBox="0 0 16 16"><path d="M3 5.500h7v6H3zM10 8l3-2v5l-3-2M4 3c2-2 6-2 8 0M4 14c2 2 6 2 8 0"/></svg>
      <svg viewBox="0 0 16 16"><path d="M4 13c-4 0-4-5-1-5 0-5 7-6 8-1 5 0 5 6 1 6z" fill="#c5c5c5"/></svg>
      <svg viewBox="0 0 16 16"><rect x="5.500" y="1" width="5" height="9" rx="1" fill="#111"/><path d="M3.500 7c0 7 9 7 9 0M8 12v3M5 15h6"/></svg>
      <svg viewBox="0 0 16 16"><path d="M1 2h3v4H1zM6 3.500h9v7H3V7M9 11v3M6 14.500h6"/></svg>
      <svg viewBox="0 0 16 16"><path d="M4 6h10v6H4zM15 8v2M1 2v3h4V2M3 5v5h2"/><path d="M6 7.500h7v3H6z" fill="#111"/></svg>
      <svg viewBox="0 0 16 16"><path d="M1 6h2.500L7 3v10l-3.500-3H1zM9 6c1 1 1 3 0 4M11 4.500c2 2 2 5 0 7M13 3c3 3 3 7 0 10"/></svg>
    </div>
    <time class="clock">00:04<br>06/12/2020</time>
    <button class="notif" aria-label="Notifications"><svg viewBox="0 0 24 28"><path d="M1 4h15v13H8l-4 4v-4H1z"/><path d="M3 8h11M3 11h11M3 14h8" stroke="#d7dcea"/><circle cx="16" cy="19" r="7.500" fill="#cfd2d8" stroke="#777"/></svg><span>1</span></button>
  </footer>
</section>
</main>
</body>
</html>
```
FILE: styles.css
```css
* { box-sizing: border-box; }
body { margin: 0; font-family: "Open Sans", "Noto Sans", sans-serif; font-size: 11px; color: #111; }
button, input, select { font: inherit; color: inherit; }
button { border: 0; padding: 0; background: none; display: flex; align-items: center; justify-content: center; }
a { color: inherit; text-decoration: none; }
h1, h2, h3, p, ul { margin: 0; padding: 0; list-style: none; }
.sprite { position: absolute; width: 0; height: 0; }
.screens { display: flex; height: 100vh; overflow: hidden; }
.screen { flex: 1; min-width: 0; display: flex; flex-direction: column; }
.browser { flex: 1; min-height: 0; display: flex; flex-direction: column; background: #df5f7d; border-right: 1px solid #00a6fb; }

/* tab strip */
.tabstrip { height: 34px; display: flex; background: #d1587a; padding-left: 8px; align-items: flex-start; }
.tabs { display: flex; height: 34px; width: 1134px; }
.tab { flex: 1; min-width: 0; display: flex; align-items: center; padding: 0 10px 0 12px; background: linear-gradient(#fb7da0, #ff8dae); color: #fff; border-radius: 8px 8px 0 0; position: relative; }
.tab + .tab::before { content: ""; position: absolute; left: 0; top: 7px; height: 20px; width: 1px; background: #fff; }
.tab:nth-last-child(2) { border-bottom-right-radius: 8px; }
.tab.tab-on { background: linear-gradient(#cf5272, #df5f7d); }
.tab.tab-on::before { display: none; }
.fav { width: 16px; height: 16px; flex: none; }
.tab-name { flex: 1; min-width: 0; margin-left: 8px; overflow: hidden; white-space: nowrap; -webkit-mask-image: linear-gradient(90deg, #000 75%, transparent); mask-image: linear-gradient(90deg, #000 75%, transparent); }
.tab:nth-child(2) .tab-name { -webkit-mask-image: none; mask-image: none; }
.rec { width: 14px; height: 14px; margin: 0 8px 0 4px; flex: none; }
.tab-x { width: 10px; height: 10px; margin-left: 8px; flex: none; }
.tab-x svg { width: 10px; height: 10px; }
.newtab { width: 28px; height: 28px; border-radius: 50%; background: #ff86a8; margin: 3px 0 0 9px; }
.newtab svg { width: 12px; height: 12px; }
.deco { width: 40px; height: 30px; margin-left: auto; }
.winbtns { display: flex; gap: 1px; }
.winbtns button { width: 45px; height: 29px; background: #efc1bb; }
.winbtns svg { width: 12px; height: 12px; }

/* toolbar */
.toolbar { height: 36px; display: flex; align-items: center; padding: 0 19px 0 6px; }
.tool { width: 32px; height: 32px; }
.tool svg { width: 16px; height: 16px; }
.dim { opacity: .5; }
.omnibox { flex: 1; height: 28px; border-radius: 14px; background: #bd8d70; margin-left: 6px; margin-right: 14px; display: flex; align-items: center; padding: 0 10px 0 12px; }
.lock { width: 12px; height: 13px; }
.omnibox input { flex: 1; border: 0; background: none; font-size: 13px; padding: 0; margin-left: 11px; color: #333; }
.star { width: 16px; height: 16px; }
.ext { width: 16px; height: 16px; margin-right: 16px; }
.face { width: 24px; height: 24px; margin-right: 18px; margin-left: -2px; }
.dots { width: 4px; height: 16px; fill: #fff; }

/* bookmarks */
.bookmarks { height: 33px; padding: 0 20px 5px 14px; display: flex; align-items: center; gap: 20px; background: linear-gradient(#dc5b79, #d04b69); border-bottom: 1px solid #8a5038; color: #fff; white-space: nowrap; }
.bookmarks a { display: flex; align-items: center; gap: 8px; }
.bookmarks svg { width: 16px; height: 16px; flex: none; }
.more { margin-left: auto; font-size: 16px; font-weight: 700; }

/* web page */
.viewport { flex: 1; min-height: 0; position: relative; overflow: hidden; padding: 0 82px 0 67px; background: #ddd radial-gradient(circle, #d0d0d0 1px, transparent 1px) 0 0 / 4px 4px; }
.site { background: #ddd; height: 100%; padding-top: 9px; color: #777; font-size: 13px; }
.sitenav { display: flex; height: 50px; background: #506463; color: #ddd; }
.sitenav a { display: flex; align-items: center; padding: 0 18px; }
.sitenav a.on { background: #46a4ad; padding: 0 20px; }
.sitesearch { margin-left: auto; width: 50px; background: #46a4ad; }
.sitesearch svg { width: 24px; height: 24px; }
.crumbs { display: flex; align-items: center; height: 25px; padding: 0 27px 0 21px; white-space: nowrap; }
.sitenav + .crumbs { margin-top: 21px; }
.crumbs b { font-size: 10px; width: 17px; text-align: center; color: #aaa; }
.crumbs .first { width: 15px; }
.crumb-end { margin-left: auto; }
.cols { display: flex; justify-content: space-between; padding: 14px 20px 0; }
.maincol { width: 873px; }
.maincol h1 { font-size: 27px; line-height: 34px; padding: 15px 1px 56px; }
.maincol p { line-height: 20px; }
.formrow { height: 254px; border-bottom: 1px solid #d0d0d0; }
.actions { margin-top: 20px; height: 74px; border: solid #cbcbcb; border-width: 1px 0 0; background: #d7d7d7; display: flex; gap: 5px; padding: 14px 0 0 225px; }
.actions button { width: 109px; height: 38px; background: #5fa0a6; color: #ddd; border-radius: 3px; }
.actions .cancel { width: 88px; background: #b97773; }
.block { width: 262px; height: 126px; background: #d4d4d4; border-radius: 3px; padding: 12px 15px; }
.block h2 { font-size: 17px; line-height: 32px; padding-bottom: 5px; border-bottom: 1px solid #c4c4c4; margin-bottom: 13px; padding-left: 25px; }
.block a { line-height: 22px; padding-left: 16px; }

/* file picker */
.modal { position: absolute; top: 31px; bottom: 37px; left: 0; right: 0; margin: 0 auto; width: 64%; display: flex; flex-direction: column; background: #fff; border: 1px solid #bbb; border-radius: 6px; box-shadow: 6px 6px 22px 2px #555; overflow: hidden; }
.modal header { height: 31px; background: #f1f1f1; border-bottom: 1px solid #ddd; display: flex; align-items: center; justify-content: center; position: relative; flex: none; }
.modal h3 { font-size: 16px; line-height: 28px; padding-bottom: 2px; color: #555; }
.modal-x { position: absolute; right: 5px; top: 5px; width: 25px; height: 15px; border: 1px solid #bbb; border-radius: 2px; background: #fff; color: #666; }
.modal-x svg { width: 9px; height: 9px; }
.modal-body { flex: 1; display: flex; }
.repos { width: 197px; border-right: 1px solid #bbb; padding: 0 7px 0 9px; color: #555; }
.repos a { display: flex; align-items: center; height: 24px; gap: 3px; }
.repos .sel { background: #f1f1f1; }
.repos svg { width: 16px; height: 16px; }
.files { flex: 1; display: flex; flex-direction: column; padding: 1px 7px 0 5px; }
.filebar { height: 40px; background: #f8f9fb; display: flex; justify-content: flex-end; padding: 4px 3px; }
.views { display: flex; height: 32px; border: 1px solid #bbb; border-radius: 4px; background: #fff; }
.views button { width: 30px; border-left: 1px solid #e6e6e6; }
.views button:first-child { border: 0; }
.views svg { width: 16px; height: 16px; }
.loading { flex: 1; display: flex; justify-content: center; padding: 218px 6px 0 0; }
.loading svg { width: 14px; height: 14px; }
.status { position: absolute; left: 0; bottom: 0; width: 453px; height: 21px; line-height: 21px; background: #910a47; color: #fff; padding-left: 5px; border-top-right-radius: 3px; }

/* taskbars */
.taskbar { height: 40px; flex: none; display: flex; background: linear-gradient(100deg, #cfe6ee, #d1e2ed 50%, #d6d7e9); }
.taskbar button { width: 48px; height: 40px; flex: none; }
.taskbar .small { width: 16px; height: 16px; }
.taskbar .app { width: 49px; }
.taskbar .app svg { width: 24px; height: 24px; }
.taskbar .tt svg { height: 17px; }
.taskbar .run { border: solid transparent; border-width: 2px 0; border-bottom-color: #0078d7; width: 40px; margin: 0 4px 0 5px; }
.taskbar .app.run:nth-child(5) { margin-left: 7px; }
.taskbar .active { background: #edf4f7 padding-box; width: 45px; margin: 0 2px; }
.clock { text-align: center; line-height: 18px; padding-top: 2px; width: 60px; }
.push { margin-left: auto; margin-right: 5px; }
.second .app { width: 42px; }
.second .run { width: 34px; margin: 0 3px 0 4px; }
.second .app.run:nth-child(5) { margin-left: 6px; }
.second .active { width: 40px; margin: 0 1px; }
.winsearch { width: 344px; height: 40px; border: 1px solid #ccc; background: #fff; display: flex; align-items: center; padding-left: 11px; gap: 12px; margin-right: 3px; }
.winsearch input { flex: 1; border: 0; padding: 0; background: none; font-size: 14px; outline: 0; }
.winsearch input::placeholder { color: #333; opacity: 1; }
.tray { display: flex; align-items: center; gap: 8px; margin-left: 8px; }
.tray svg { width: 16px; height: 16px; fill: none; stroke: #111; }
.second .clock { margin-left: 9px; }
.second .notif { margin-left: auto; margin-right: 4px; position: relative; width: 52px; border-right: 1px solid #aab; }
.notif svg { width: 24px; height: 28px; }
.notif span { position: absolute; left: 27px; top: 15px; }

/* desktop */
.desktop { flex: 1; min-height: 0; position: relative; background: radial-gradient(ellipse 16% 45% at 89% 36%, #0060f6, transparent), linear-gradient(#0088e255, transparent 45%), linear-gradient(97deg, #00adfb 0%, #00b5ff 18%, #00b2ff 32%, #0099ee 48%, #0077dd 66%, #0058cc 80%, #0440b8 100%); }
.rays { position: absolute; inset: 0; width: 100%; height: 100%; }
.icons { position: relative; display: grid; grid-template-columns: 97px 97px; grid-auto-rows: 99px; padding-top: 7px; }
.icons a { display: flex; flex-direction: column; align-items: center; text-align: center; color: #fff; line-height: 15px; text-shadow: 1px 1px 2px #000, 0 0 2px #000; }
.icons svg { width: 48px; height: 48px; margin-bottom: 3px; flex: none; }
.c1 { grid-column: 1; } .c2 { grid-column: 2; }
.r1 { grid-row: 1; } .r2 { grid-row: 2; } .r3 { grid-row: 3; } .r4 { grid-row: 4; } .r5 { grid-row: 5; } .r6 { grid-row: 6; } .r7 { grid-row: 7; }

/* My Connection window */
.mcwin { position: absolute; left: 483px; top: 45px; width: 660px; background: #969696; border-radius: 7px; overflow: hidden; }
.mc-title { height: 45px; background: linear-gradient(#e6e4e4, #c9c9c9); border-radius: 6px; display: flex; align-items: center; padding: 0 10px 0 21px; gap: 12px; }
.mc-logo { width: 51px; height: 36px; margin-right: auto; }
.mc-min, .mc-close { width: 23px; height: 23px; border-radius: 2px; background: linear-gradient(#6b6b6b, #333); }
.mc-close { background: linear-gradient(#ffe23c, #fdb900); }
.mc-title button svg { width: 14px; height: 14px; }
.mc-tabs { height: 58px; display: grid; grid-template-columns: repeat(7, 1fr); background: linear-gradient(#8d8d8d, #5b5b5b 49%, #151515 50%, #0e0e0e); border-radius: 0 0 5px 5px; }
.mc-tabs button { padding-bottom: 6px; }
.mc-tabs button + button { border-left: 1px solid #8b8b8b; }
.mc-tabs svg { width: 34px; height: 28px; }
.mc-tabs .on { padding: 0 0 8px 2px; background: radial-gradient(ellipse 36px 14px at 50% 62%, #d5d83c, transparent); }
.mc-tabs .on svg { width: 36px; height: 31px; }
.mc-main { margin: 12px 10px 11px; height: 334px; background: linear-gradient(#fafafa, #eee 16px); border: 1px solid #fff; border-radius: 4px; display: flex; flex-direction: column; justify-content: space-between; padding: 103px 0 9px; }
.mc-form { display: flex; flex-direction: column; width: 397px; margin-left: 122px; }
.mc-form label { font-weight: 700; font-size: 12px; line-height: 18px; margin: 0 0 2px 7px; color: #000; }
.mc-form select { appearance: none; height: 25px; border: 1px solid #aaa; border-radius: 2px; opacity: 1; background: linear-gradient(135deg, #aaa 50%, transparent 0) right 8px center / 4px 4px no-repeat, linear-gradient(225deg, #aaa 50%, transparent 0) right 12px center / 4px 4px no-repeat, linear-gradient(90deg, #eee calc(100% - 24px), #fff 0); box-shadow: inset 0 0 0 1px #fff; }
.mc-go { width: 183px; height: 24px; margin: 28px 0 0 113px; border: 1px solid #a2a2a2; border-radius: 9px; background: linear-gradient(#c8c8c8, #b0b0b0); color: #777; font-size: 10px; }
.mc-foot { display: flex; align-items: flex-end; }
.mc-mon { width: 74px; height: 76px; margin: 0 193px 9px 10px; }
.mc-social { display: flex; gap: 5px; }
.mc-social svg { width: 39px; height: 39px; display: block; }
.mc-status { height: 40px; line-height: 40px; padding-left: 35px; background: linear-gradient(#ececec, #c0c0c0); border-radius: 5px; color: #000; font-size: 10px; }

.watermark { position: absolute; right: 53px; bottom: 32px; width: 313px; color: #7f9cc8; font-size: 14px; line-height: 20px; white-space: nowrap; }
.watermark .w1 { font-size: 19px; line-height: 26px; }
.share { position: absolute; left: 384px; bottom: 9px; width: 599px; height: 43px; background: #f7fcff; box-shadow: 0 1px 4px #0358; display: flex; align-items: center; padding: 0 11px; white-space: nowrap; }
.grip { width: 5px; height: 12px; border: solid #bbb; border-width: 0 1px; margin-right: 10px; }
.share span { flex: 1; }
.share .stop { width: 129px; height: 32px; border-radius: 3px; background: #1a73e8; color: #fff; font-weight: 600; margin-right: 10px; }
.share .hide { color: #1a64d4; }
```
